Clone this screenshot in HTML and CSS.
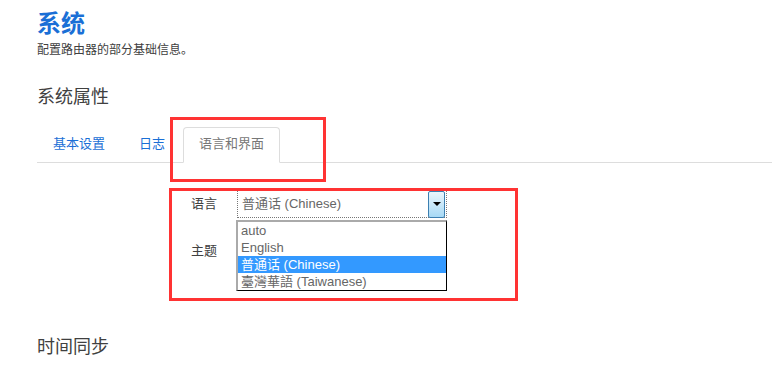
FILE: index.html
```html
<!DOCTYPE html>
<html lang="zh-CN">
<head>
    <meta charset="UTF-8">
    <meta name="viewport" content="width=device-width, initial-scale=1.0">
    <title>系统</title>
    <link rel="stylesheet" href="styles.css">
</head>
<body>
    <div id="maincontent">
        <h2 class="pageTitle">系统</h2>
        <div class="pageDesc">配置路由器的部分基础信息。</div>

        <h3 class="sectionTitle">系统属性</h3>
        <ul class="tabs">
            <li class="tab"><a href="#">基本设置</a></li>
            <li class="tab"><a href="#">日志</a></li>
            <li class="tab active"><a href="#">语言和界面</a></li>
        </ul>

        <div class="tabBody">
            <div class="field">
                <label class="fieldLabel">语言</label>
                <div class="fakeSelect focused">
                    <span class="selectValue">普通话 (Chinese)</span>
                    <span class="selectButton"><span class="arrow"></span></span>
                </div>
            </div>
            <div class="field">
                <label class="fieldLabel">主题</label>
                <div class="fakeSelect">
                    <span class="selectButton"><span class="arrow"></span></span>
                </div>
            </div>
        </div>

        <h3 class="sectionTitle timeTitle">时间同步</h3>
    </div>

    <!-- open dropdown of the language select -->
    <ul class="dropList">
        <li>auto</li>
        <li>English</li>
        <li class="selected">普通话 (Chinese)</li>
        <li>臺灣華語 (Taiwanese)</li>
    </ul>

    <!-- annotation boxes -->
    <div class="mark markTab"></div>
    <div class="mark markForm"></div>
</body>
</html>
```

FILE: styles.css
```css
body {
    margin: 0;
    background: #fff;
    color: #404040;
    font-family: "Liberation Sans", "Noto Sans CJK SC", Arial, sans-serif;
}
#maincontent {
    padding-left: 37px;
}
.pageTitle {
    margin: 8px 0 0;
    font-size: 24px;
    line-height: 32px;
    font-weight: bold;
    color: #1a6fd6;
}
.pageDesc {
    margin-top: 2px;
    font-size: 12px;
    line-height: 16px;
    color: #404040;
}
.sectionTitle {
    margin: 27px 0 0;
    font-size: 18px;
    line-height: 24px;
    font-weight: normal;
    color: #404040;
}

/* Tabs */
.tabs {
    display: flex;
    margin: 18px 0 0;
    padding: 0;
    list-style: none;
    border-bottom: 1px solid #ddd;
}
.tab {
    margin-right: 2px;
    margin-bottom: -1px;
}
.tab a {
    display: block;
    padding: 6px 15px 8px;
    line-height: 20px;
    font-size: 13px;
    color: #1a6fd6;
    text-decoration: none;
    border: 1px solid transparent;
    border-radius: 4px 4px 0 0;
}
.tab.active a {
    color: #777;
    background: #fff;
    border-color: #ddd #ddd #fff;
}

/* Form */
.tabBody {
    padding: 27px 0 0 154px;
    display: flex;
    flex-direction: column;
    gap: 19px;
}
.field {
    display: flex;
    align-items: center;
    height: 28px;
}
.fieldLabel {
    width: 46px;
    font-size: 13px;
    line-height: 16px;
    color: #404040;
}
.fakeSelect {
    width: 208px;
    height: 26px;
    display: flex;
    align-items: center;
    justify-content: space-between;
    border: 1px solid transparent;
}
.fakeSelect.focused {
    border: 1px dotted #777;
}
.selectValue {
    padding-left: 4px;
    font-size: 13px;
    line-height: 16px;
    color: #666;
}
.selectButton {
    width: 15px;
    height: 25px;
    margin-left: auto;
    margin-right: 1px;
    display: flex;
    align-items: center;
    justify-content: center;
    border: 1px solid #3c7fb1;
    border-radius: 2px;
    background: linear-gradient(#eaf6fd, #a7d9f5);
}
.arrow {
    width: 0;
    height: 0;
    border-left: 4px solid transparent;
    border-right: 4px solid transparent;
    border-top: 4px solid #000;
}
.timeTitle {
    margin-top: 70px;
}

/* Dropdown list (overlay) */
.dropList {
    position: absolute;
    left: 236px;
    top: 220px;
    width: 208px;
    margin: 0;
    padding: 0;
    list-style: none;
    background: #fff;
    border-top: 2px solid #aaa;
    border-left: 2px solid #aaa;
    border-right: 1px solid #000;
    border-bottom: 1px solid #000;
}
.dropList li {
    height: 17px;
    line-height: 17px;
    padding-left: 3px;
    font-size: 13px;
    color: #666;
}
.dropList li.selected {
    background: #3399ff;
    color: #fff;
}

/* Red annotation boxes */
.mark {
    position: absolute;
    border: 3px solid #f33;
    box-sizing: border-box;
}
.markTab {
    left: 170px;
    top: 117px;
    width: 156px;
    height: 65px;
}
.markForm {
    left: 169px;
    top: 188px;
    width: 349px;
    height: 113px;
}
```
